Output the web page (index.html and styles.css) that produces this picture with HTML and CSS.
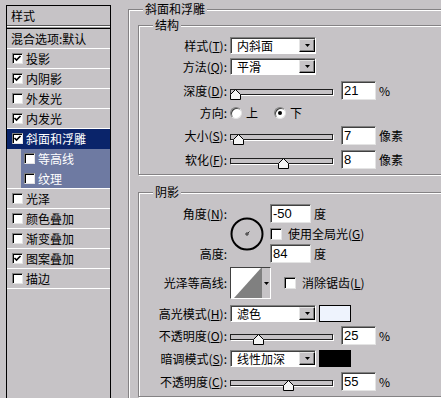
FILE: index.html
```html
<!DOCTYPE html>
<html lang="zh-CN">
<head>
    <meta charset="UTF-8">
    <meta name="viewport" content="width=device-width, initial-scale=1.0">
    <title>图层样式 - 斜面和浮雕</title>
    <link rel="stylesheet" href="styles.css">
</head>
<body>
<div class="dialog">
    <ul class="styles">
        <li class="head">样式</li>
        <li class="blend">混合选项:默认</li>
        <li><span class="cb"><svg viewBox="0 0 9 9"><polyline points="1.5,4 3.5,6 7.5,2"/></svg></span>投影</li>
        <li><span class="cb"><svg viewBox="0 0 9 9"><polyline points="1.5,4 3.5,6 7.5,2"/></svg></span>内阴影</li>
        <li><span class="cb"></span>外发光</li>
        <li><span class="cb"><svg viewBox="0 0 9 9"><polyline points="1.5,4 3.5,6 7.5,2"/></svg></span>内发光</li>
        <li class="active"><span class="cb"><svg viewBox="0 0 9 9"><polyline points="1.5,4 3.5,6 7.5,2"/></svg></span>斜面和浮雕</li>
        <li class="sub first"><span class="cb"></span>等高线</li>
        <li class="sub"><span class="cb"></span>纹理</li>
        <li><span class="cb"></span>光泽</li>
        <li><span class="cb"></span>颜色叠加</li>
        <li><span class="cb"></span>渐变叠加</li>
        <li><span class="cb"><svg viewBox="0 0 9 9"><polyline points="1.5,4 3.5,6 7.5,2"/></svg></span>图案叠加</li>
        <li><span class="cb"></span>描边</li>
    </ul>

    <div class="panel">
        <fieldset class="group outer">
            <legend>斜面和浮雕</legend>

            <fieldset class="group inner">
                <legend>结构</legend>

                <div class="row">
                    <label>样式(<u>T</u>):</label>
                    <div class="ctl">
                        <div class="select"><span>内斜面</span><b class="drop"><svg viewBox="0 0 5 3"><polygon points="0,0 5,0 2.5,3"/></svg></b></div>
                    </div>
                </div>
                <div class="row tight">
                    <label>方法(<u>Q</u>):</label>
                    <div class="ctl">
                        <div class="select"><span>平滑</span><b class="drop"><svg viewBox="0 0 5 3"><polygon points="0,0 5,0 2.5,3"/></svg></b></div>
                    </div>
                </div>
                <div class="row loose">
                    <label>深度(<u>D</u>):</label>
                    <div class="ctl">
                        <div class="slider"><div class="track"></div><svg class="thumb" style="left:0px" viewBox="0 0 11 11"><polygon points="0.5,10.5 0.5,5.5 5.5,0.5 10.5,5.5 10.5,10.5"/></svg></div>
                        <div class="num">21</div><span class="unit">%</span>
                    </div>
                </div>
                <div class="row loose">
                    <label>方向:</label>
                    <div class="ctl">
                        <span class="rb"></span><span class="rl">上</span>
                        <span class="rb on"></span><span class="rl">下</span>
                    </div>
                </div>
                <div class="row loose">
                    <label>大小(<u>S</u>):</label>
                    <div class="ctl">
                        <div class="slider"><div class="track"></div><svg class="thumb" style="left:3px" viewBox="0 0 11 11"><polygon points="0.5,10.5 0.5,5.5 5.5,0.5 10.5,5.5 10.5,10.5"/></svg></div>
                        <div class="num">7</div><span class="unit">像素</span>
                    </div>
                </div>
                <div class="row">
                    <label>软化(<u>F</u>):</label>
                    <div class="ctl">
                        <div class="slider"><div class="track"></div><svg class="thumb" style="left:48px" viewBox="0 0 11 11"><polygon points="0.5,10.5 0.5,5.5 5.5,0.5 10.5,5.5 10.5,10.5"/></svg></div>
                        <div class="num">8</div><span class="unit">像素</span>
                    </div>
                </div>
            </fieldset>

            <fieldset class="group inner shade">
                <legend>阴影</legend>

                <div class="angle">
                    <label class="top-label">角度(<u>N</u>):</label>
                    <svg class="dial" viewBox="0 0 34 34">
                        <circle cx="17" cy="17" r="15.5"/>
                        <path d="M17 15v4M15 17h4M18 16l1.5-1.5"/>
                    </svg>
                    <div class="ctl first-ctl"><div class="num wide">-50</div><span class="unit">度</span></div>
                    <div class="ctl mid-ctl"><span class="cb big"></span><span class="cl">使用全局光(<u>G</u>)</span></div>
                    <label class="bottom-label">高度:</label>
                    <div class="ctl last-ctl"><div class="num wide">84</div><span class="unit">度</span></div>
                </div>

                <div class="row tight">
                    <label>光泽等高线:</label>
                    <div class="ctl">
                        <div class="contour">
                            <svg class="curve" viewBox="0 0 30 30"><polygon points="3,30 30,0 30,30"/></svg>
                            <b class="cbtn"><svg viewBox="0 0 5 3"><polygon points="0,0 5,0 2.5,3"/></svg></b>
                        </div>
                        <span class="cb big gloss"></span><span class="cl">消除锯齿(<u>L</u>)</span>
                    </div>
                </div>
                <div class="row loose">
                    <label>高光模式(<u>H</u>):</label>
                    <div class="ctl">
                        <div class="select"><span>滤色</span><b class="drop"><svg viewBox="0 0 5 3"><polygon points="0,0 5,0 2.5,3"/></svg></b></div>
                        <span class="swatch light"></span>
                    </div>
                </div>
                <div class="row tight">
                    <label>不透明度(<u>O</u>):</label>
                    <div class="ctl">
                        <div class="slider"><div class="track"></div><svg class="thumb" style="left:23px" viewBox="0 0 11 11"><polygon points="0.5,10.5 0.5,5.5 5.5,0.5 10.5,5.5 10.5,10.5"/></svg></div>
                        <div class="num">25</div><span class="unit">%</span>
                    </div>
                </div>
                <div class="row">
                    <label>暗调模式(<u>S</u>):</label>
                    <div class="ctl">
                        <div class="select"><span>线性加深</span><b class="drop"><svg viewBox="0 0 5 3"><polygon points="0,0 5,0 2.5,3"/></svg></b></div>
                        <span class="swatch dark"></span>
                    </div>
                </div>
                <div class="row">
                    <label>不透明度(<u>C</u>):</label>
                    <div class="ctl">
                        <div class="slider"><div class="track"></div><svg class="thumb" style="left:53px" viewBox="0 0 11 11"><polygon points="0.5,10.5 0.5,5.5 5.5,0.5 10.5,5.5 10.5,10.5"/></svg></div>
                        <div class="num">55</div><span class="unit">%</span>
                    </div>
                </div>
            </fieldset>
        </fieldset>
    </div>
</div>
</body>
</html>
```

FILE: styles.css
```css
* {
    box-sizing: border-box;
}

body {
    margin: 0;
    width: 441px;
    height: 398px;
    overflow: hidden;
    background-color: #c6c3c6; /* dialog gray */
    font-family: "Noto Sans CJK SC", "Liberation Sans", sans-serif;
    font-size: 12px;
    line-height: 14px;
    color: #000;
}

.dialog {
    display: flex;
    height: 398px;
    padding-left: 6px;
}

/* list of styles on the left */
.styles {
    list-style: none;
    margin: 5px 0 0 0;
    padding: 0;
    width: 105px;
    flex: none;
    border: 1px solid #000;
    border-bottom: none;
}

.styles li {
    display: flex;
    align-items: center;
    height: 20px;
    padding-left: 5px;
    border-bottom: 1px solid #fff;
    white-space: nowrap;
}

.styles .head {
    height: 23px;
    padding-left: 4px;
    align-items: flex-start;
    line-height: 19px;
    border-bottom: 1px solid #000;
    background: linear-gradient(#c6c3c6 19px, #555 19px, #555 20px, #fff 20px, #fff 21px, #999 21px);
}

.styles .blend {
    padding-left: 4px;
}

.styles .cb {
    margin-right: 3px;
}

.styles .active {
    background-color: #0a246a; /* selected row */
    color: #fff;
    border-bottom-color: transparent;
}

.styles .sub {
    padding-left: 17px;
    color: #fff;
    background: linear-gradient(to right, #c6c3c6 14px, #6e7aa2 14px);
}

.styles .sub.first {
    border-bottom-color: transparent;
}

/* checkbox */
.cb {
    display: flex;
    align-items: center;
    justify-content: center;
    flex: none;
    width: 11px;
    height: 11px;
    background-color: #fff;
    border: 1px solid;
    border-color: #808080 #e4e4e4 #e4e4e4 #808080;
    box-shadow: inset 1px 1px 0 #000;
}

.cb svg {
    width: 9px;
    height: 9px;
    fill: none;
    stroke: #000;
    stroke-width: 1.6;
}

.cb.big {
    width: 12px;
    height: 12px;
}

.cl {
    margin-left: 6px;
    white-space: nowrap;
}

/* etched group boxes */
.panel {
    margin-left: 17px;
    flex: none;
}

.group {
    margin: 0;
    padding: 0;
    border: 1px solid #848284;
    box-shadow: inset 1px 1px 0 #fff, 1px 1px 0 #fff;
}

.group > legend {
    margin-left: 14px;
    padding: 0 2px;
    line-height: 14px;
    background-color: #c6c3c6;
}

.outer {
    margin-top: 2px;
    width: 330px;
    padding-bottom: 4px;
}

.inner {
    margin: 2px 0 0 9px;
    width: 320px;
    padding-bottom: 5px;
}

.shade {
    margin-top: 10px;
}

/* form rows */
.row {
    display: grid;
    grid-template-columns: 88px auto;
    column-gap: 3px;
    align-items: center;
    margin-top: 5px;
}

.row.tight {
    margin-top: 4px;
}

.row.loose {
    margin-top: 6px;
}

.row > label,
.angle > label {
    text-align: right;
    white-space: nowrap;
}

.ctl {
    display: flex;
    align-items: center;
}

/* drop-down */
.select {
    display: flex;
    width: 86px;
    height: 17px;
    flex: none;
    background-color: #fff;
    border: 1px solid;
    border-color: #808080 #fff #fff #808080;
    box-shadow: inset 1px 1px 0 #404040;
}

.select span {
    flex: 1;
    padding-left: 6px;
    line-height: 15px;
    white-space: nowrap;
}

.drop {
    display: flex;
    align-items: center;
    justify-content: center;
    width: 16px;
    height: 13px;
    margin-top: 1px;
    background-color: #c6c3c6;
    border: 1px solid;
    border-color: #e4e4e4 #000 #000 #e4e4e4;
    box-shadow: inset -1px -1px 0 #808080;
}

.drop svg,
.cbtn svg {
    width: 5px;
    height: 3px;
    fill: #000;
}

/* slider */
.slider {
    position: relative;
    width: 103px;
    height: 19px;
    flex: none;
}

.track {
    margin-top: 8px;
    height: 6px;
    border: 1px solid #202020;
    box-shadow: 1px 1px 0 #fff;
}

.thumb {
    position: absolute;
    top: 8px;
    width: 11px;
    height: 11px;
    fill: #f4f4f4;
    stroke: #000;
    stroke-width: 1;
}

/* number fields */
.num {
    width: 35px;
    height: 19px;
    margin-left: 8px;
    padding-left: 2px;
    background-color: #fff;
    border: 1px solid;
    border-color: #808080 #e4e4e4 #e4e4e4 #808080;
    box-shadow: inset 1px 1px 0 #404040;
    font-family: "Liberation Sans", sans-serif;
    font-size: 13px;
    line-height: 17px;
}

.num.wide {
    width: 41px;
    margin-left: 0;
}

.unit {
    margin-left: 3px;
}

/* radio buttons */
.rb {
    display: flex;
    align-items: center;
    justify-content: center;
    flex: none;
    width: 12px;
    height: 12px;
    border-radius: 50%;
    background-color: #fff;
    border: 1px solid;
    border-color: #808080 #e4e4e4 #e4e4e4 #808080;
    box-shadow: inset 1px 1px 0 #404040;
}

.rb.on::after {
    content: "";
    width: 4px;
    height: 4px;
    border-radius: 50%;
    background-color: #000;
}

.rl {
    margin-left: 4px;
}

.rl + .rb {
    margin-left: 16px;
}

/* angle block */
.angle {
    display: grid;
    grid-template-columns: 88px 37px auto;
    grid-template-rows: 19px 21px 19px;
    column-gap: 3px;
    align-items: center;
    margin-top: 5px;
}

.top-label {
    grid-column: 1;
    grid-row: 1;
}

.bottom-label {
    grid-column: 1;
    grid-row: 3;
}

.dial {
    grid-column: 2;
    grid-row: 1 / 4;
    width: 34px;
    height: 34px;
    fill: none;
    stroke: #000;
}

.dial circle {
    stroke-width: 2;
}

.dial path {
    stroke-width: 1;
    stroke: #333;
}

.first-ctl {
    grid-column: 3;
    grid-row: 1;
}

.mid-ctl {
    grid-column: 3;
    grid-row: 2;
}

.last-ctl {
    grid-column: 3;
    grid-row: 3;
}

/* gloss contour picker */
.contour {
    display: flex;
    width: 41px;
    height: 32px;
    flex: none;
    border: 1px solid;
    border-color: #404040 #fff #fff #404040;
}

.curve {
    width: 30px;
    height: 30px;
    background-color: #fff;
}

.curve polygon {
    fill: #808080;
}

.cbtn {
    display: flex;
    align-items: center;
    justify-content: center;
    flex: 1;
    background-color: #c6c3c6;
    border-left: 1px solid #808080;
}

.cb.gloss {
    margin-left: 13px;
}

/* colour swatches */
.swatch {
    width: 32px;
    height: 17px;
    margin-left: 3px;
    border: 1px solid #000;
}

.swatch.light {
    background-color: #eef3fd;
}

.swatch.dark {
    background-color: #000;
}
```
